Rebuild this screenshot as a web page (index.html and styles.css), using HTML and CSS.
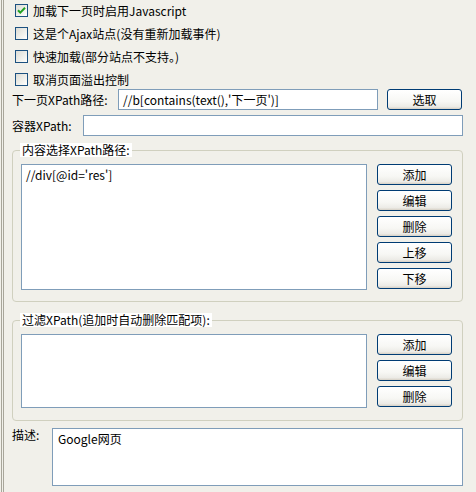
FILE: index.html
```html
<!DOCTYPE html>
<html lang="zh-CN">
<head>
<meta charset="utf-8">
<link rel="stylesheet" href="styles.css">
</head>
<body>
<div class="frame">
  <div class="content">
    <div class="checks">
      <label class="check"><span class="box"><svg class="tick" viewBox="0 0 11 11" width="11" height="11"><path d="M2 5.2 L4.3 7.6 L9 2.8" fill="none" stroke="#21a121" stroke-width="2"/></svg></span><span>加载下一页时启用Javascript</span></label>
      <label class="check"><span class="box"></span><span>这是个Ajax站点(没有重新加载事件)</span></label>
      <label class="check"><span class="box"></span><span>快速加载(部分站点不支持。)</span></label>
      <label class="check"><span class="box"></span><span>取消页面溢出控制</span></label>
    </div>
    <div class="field-row row-next">
      <span class="lbl lbl-next">下一页XPath路径:</span>
      <div class="input input-next">//b[contains(text(),'下一页')]</div>
      <button class="btn btn-pick">选取</button>
    </div>
    <div class="field-row row-container">
      <span class="lbl lbl-container">容器XPath:</span>
      <div class="input input-container"></div>
    </div>
    <fieldset class="group group-content">
      <legend>内容选择XPath路径:</legend>
      <div class="group-body">
        <div class="listbox list-content"><div class="item">//div[@id='res']</div></div>
        <div class="btn-col">
          <button class="btn">添加</button>
          <button class="btn">编辑</button>
          <button class="btn">删除</button>
          <button class="btn">上移</button>
          <button class="btn">下移</button>
        </div>
      </div>
    </fieldset>
    <fieldset class="group group-filter">
      <legend>过滤XPath(追加时自动删除匹配项):</legend>
      <div class="group-body">
        <div class="listbox list-filter"></div>
        <div class="btn-col">
          <button class="btn">添加</button>
          <button class="btn">编辑</button>
          <button class="btn">删除</button>
        </div>
      </div>
    </fieldset>
    <div class="desc-row">
      <span class="lbl lbl-desc">描述:</span>
      <div class="textarea">Google网页</div>
    </div>
  </div>
</div>
</body>
</html>
```
FILE: styles.css
```css
* { box-sizing: border-box; }
html, body { margin: 0; padding: 0; }
body {
  background: #f1f0ea;
  font-family: "Noto Sans CJK SC", "Noto Sans", sans-serif;
  font-size: 12px;
  line-height: 14px;
  color: #000;
  width: 476px;
  height: 492px;
  overflow: hidden;
}
.frame {
  margin-left: 1px;
  border-left: 3px double #a8a69a;
  height: 492px;
}
.content {
  width: 459px;
  padding-left: 8px;
}
.checks {
  padding-top: 4px;
  padding-left: 3px;
  display: flex;
  flex-direction: column;
  gap: 10px;
}
.check {
  display: flex;
  align-items: center;
  height: 13px;
  gap: 5px;
  white-space: nowrap;
}
.box {
  width: 13px;
  height: 13px;
  border: 1px solid #1c5180;
  background: linear-gradient(135deg, #dcdcd5 0%, #f4f4f0 70%, #ffffff 100%);
  display: flex;
  align-items: center;
  justify-content: center;
  flex: none;
}
.tick { display: block; }
.field-row {
  display: flex;
  align-items: center;
  height: 21px;
}
.row-next { margin-top: 3px; }
.row-container { margin-top: 5px; }
.lbl { white-space: nowrap; flex: none; }
.lbl-next { width: 106px; }
.lbl-container { width: 71px; }
.input {
  height: 21px;
  border: 1px solid #7f9db9;
  background: #fff;
  padding: 0 4px;
  line-height: 19px;
  white-space: nowrap;
  overflow: hidden;
}
.input-next { width: 260px; }
.input-container { width: 380px; }
.btn {
  display: block;
  width: 75px;
  height: 21px;
  margin: 0;
  padding: 0;
  border: 1px solid #003c74;
  border-radius: 3px;
  background: linear-gradient(180deg, #ffffff 0%, #f7f7f4 60%, #ecebe6 88%, #d6d0c5 100%);
  font-family: "Noto Sans CJK SC", sans-serif;
  font-size: 12px;
  line-height: 19px;
  color: #000;
  text-align: center;
}
.btn-pick { margin-left: 9px; }
.group {
  width: 451px;
  margin: 7px 0 0;
  padding: 7px 10px 11px 8px;
  border: 1px solid #d0d0bf;
  border-radius: 4px;
  min-width: 0;
}
.group legend {
  margin-left: -1px;
  padding: 0 2px;
  background: #fff;
  line-height: 14px;
  font-size: 12px;
}
.group-filter {
  margin-top: 11px;
  padding-bottom: 12px;
}
.group-body {
  display: flex;
  gap: 10px;
  align-items: flex-start;
}
.listbox {
  width: 346px;
  border: 1px solid #7f9db9;
  background: #fff;
  padding: 3px 4px;
}
.list-content { height: 126px; }
.list-filter { height: 74px; }
.btn-col {
  display: flex;
  flex-direction: column;
  gap: 5px;
}
.desc-row {
  display: flex;
  align-items: flex-start;
  margin-top: 7px;
}
.lbl-desc { width: 40px; }
.textarea {
  width: 411px;
  height: 58px;
  border: 1px solid #7f9db9;
  background: #fff;
  padding: 3px 5px;
}
```
